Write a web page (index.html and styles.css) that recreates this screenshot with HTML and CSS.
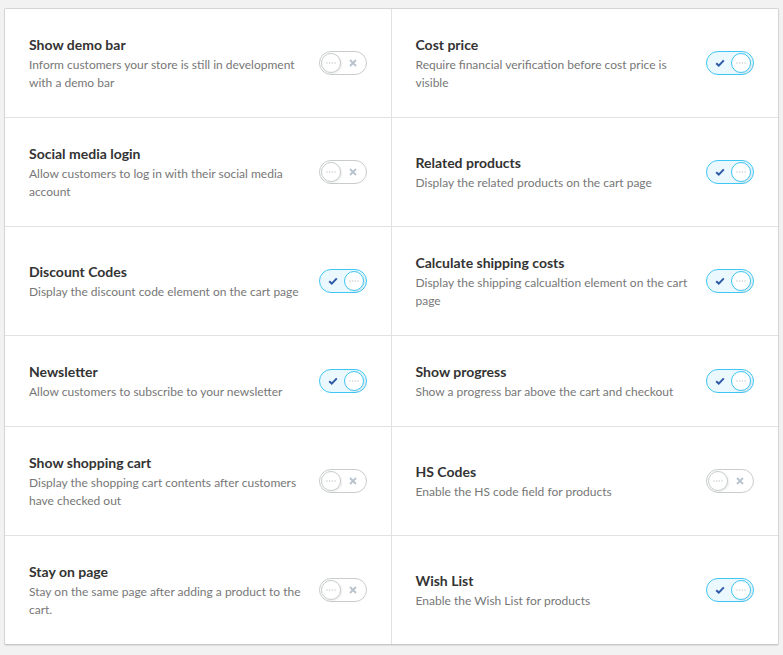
FILE: index.html
```html
<!DOCTYPE html>
<html lang="en">

<head>
    <meta charset="UTF-8">
    <title>Store settings</title>
    <link rel="stylesheet" href="styles.css">
</head>

<body>
    <div class="settings">
        <div class="setting">
            <div class="text">
                <h3>Show demo bar</h3>
                <p>Inform customers your store is still in development with a demo bar</p>
            </div>
            <span class="toggle"><span class="knob"><svg viewBox="0 0 10 2" width="10" height="2"><circle cx="1" cy="1" r="0.7"/><circle cx="3.7" cy="1" r="0.7"/><circle cx="6.3" cy="1" r="0.7"/><circle cx="9" cy="1" r="0.7"/></svg></span><span class="mark"><svg class="cross" viewBox="0 0 8 8" width="8" height="8"><path d="M1 1L7 7M7 1L1 7"/></svg></span></span>
        </div>
        <div class="setting">
            <div class="text">
                <h3>Cost price</h3>
                <p>Require financial verification before cost price is visible</p>
            </div>
            <span class="toggle on"><span class="knob"><svg viewBox="0 0 10 2" width="10" height="2"><circle cx="1" cy="1" r="0.7"/><circle cx="3.7" cy="1" r="0.7"/><circle cx="6.3" cy="1" r="0.7"/><circle cx="9" cy="1" r="0.7"/></svg></span><span class="mark"><svg class="check" viewBox="0 0 10 8" width="10" height="8"><path d="M1.2 4.2L3.8 6.6L8.8 1.4"/></svg></span></span>
        </div>

        <div class="setting">
            <div class="text">
                <h3>Social media login</h3>
                <p>Allow customers to log in with their social media account</p>
            </div>
            <span class="toggle"><span class="knob"><svg viewBox="0 0 10 2" width="10" height="2"><circle cx="1" cy="1" r="0.7"/><circle cx="3.7" cy="1" r="0.7"/><circle cx="6.3" cy="1" r="0.7"/><circle cx="9" cy="1" r="0.7"/></svg></span><span class="mark"><svg class="cross" viewBox="0 0 8 8" width="8" height="8"><path d="M1 1L7 7M7 1L1 7"/></svg></span></span>
        </div>
        <div class="setting">
            <div class="text">
                <h3>Related products</h3>
                <p>Display the related products on the cart page</p>
            </div>
            <span class="toggle on"><span class="knob"><svg viewBox="0 0 10 2" width="10" height="2"><circle cx="1" cy="1" r="0.7"/><circle cx="3.7" cy="1" r="0.7"/><circle cx="6.3" cy="1" r="0.7"/><circle cx="9" cy="1" r="0.7"/></svg></span><span class="mark"><svg class="check" viewBox="0 0 10 8" width="10" height="8"><path d="M1.2 4.2L3.8 6.6L8.8 1.4"/></svg></span></span>
        </div>

        <div class="setting">
            <div class="text">
                <h3>Discount Codes</h3>
                <p>Display the discount code element on the cart page</p>
            </div>
            <span class="toggle on"><span class="knob"><svg viewBox="0 0 10 2" width="10" height="2"><circle cx="1" cy="1" r="0.7"/><circle cx="3.7" cy="1" r="0.7"/><circle cx="6.3" cy="1" r="0.7"/><circle cx="9" cy="1" r="0.7"/></svg></span><span class="mark"><svg class="check" viewBox="0 0 10 8" width="10" height="8"><path d="M1.2 4.2L3.8 6.6L8.8 1.4"/></svg></span></span>
        </div>
        <div class="setting">
            <div class="text">
                <h3>Calculate shipping costs</h3>
                <p>Display the shipping calcualtion element on the cart page</p>
            </div>
            <span class="toggle on"><span class="knob"><svg viewBox="0 0 10 2" width="10" height="2"><circle cx="1" cy="1" r="0.7"/><circle cx="3.7" cy="1" r="0.7"/><circle cx="6.3" cy="1" r="0.7"/><circle cx="9" cy="1" r="0.7"/></svg></span><span class="mark"><svg class="check" viewBox="0 0 10 8" width="10" height="8"><path d="M1.2 4.2L3.8 6.6L8.8 1.4"/></svg></span></span>
        </div>

        <div class="setting">
            <div class="text">
                <h3>Newsletter</h3>
                <p>Allow customers to subscribe to your newsletter</p>
            </div>
            <span class="toggle on"><span class="knob"><svg viewBox="0 0 10 2" width="10" height="2"><circle cx="1" cy="1" r="0.7"/><circle cx="3.7" cy="1" r="0.7"/><circle cx="6.3" cy="1" r="0.7"/><circle cx="9" cy="1" r="0.7"/></svg></span><span class="mark"><svg class="check" viewBox="0 0 10 8" width="10" height="8"><path d="M1.2 4.2L3.8 6.6L8.8 1.4"/></svg></span></span>
        </div>
        <div class="setting">
            <div class="text">
                <h3>Show progress</h3>
                <p>Show a progress bar above the cart and checkout</p>
            </div>
            <span class="toggle on"><span class="knob"><svg viewBox="0 0 10 2" width="10" height="2"><circle cx="1" cy="1" r="0.7"/><circle cx="3.7" cy="1" r="0.7"/><circle cx="6.3" cy="1" r="0.7"/><circle cx="9" cy="1" r="0.7"/></svg></span><span class="mark"><svg class="check" viewBox="0 0 10 8" width="10" height="8"><path d="M1.2 4.2L3.8 6.6L8.8 1.4"/></svg></span></span>
        </div>

        <div class="setting">
            <div class="text">
                <h3>Show shopping cart</h3>
                <p>Display the shopping cart contents after customers have checked out</p>
            </div>
            <span class="toggle"><span class="knob"><svg viewBox="0 0 10 2" width="10" height="2"><circle cx="1" cy="1" r="0.7"/><circle cx="3.7" cy="1" r="0.7"/><circle cx="6.3" cy="1" r="0.7"/><circle cx="9" cy="1" r="0.7"/></svg></span><span class="mark"><svg class="cross" viewBox="0 0 8 8" width="8" height="8"><path d="M1 1L7 7M7 1L1 7"/></svg></span></span>
        </div>
        <div class="setting">
            <div class="text">
                <h3>HS Codes</h3>
                <p>Enable the HS code field for products</p>
            </div>
            <span class="toggle"><span class="knob"><svg viewBox="0 0 10 2" width="10" height="2"><circle cx="1" cy="1" r="0.7"/><circle cx="3.7" cy="1" r="0.7"/><circle cx="6.3" cy="1" r="0.7"/><circle cx="9" cy="1" r="0.7"/></svg></span><span class="mark"><svg class="cross" viewBox="0 0 8 8" width="8" height="8"><path d="M1 1L7 7M7 1L1 7"/></svg></span></span>
        </div>

        <div class="setting">
            <div class="text">
                <h3>Stay on page</h3>
                <p>Stay on the same page after adding a product to the cart.</p>
            </div>
            <span class="toggle"><span class="knob"><svg viewBox="0 0 10 2" width="10" height="2"><circle cx="1" cy="1" r="0.7"/><circle cx="3.7" cy="1" r="0.7"/><circle cx="6.3" cy="1" r="0.7"/><circle cx="9" cy="1" r="0.7"/></svg></span><span class="mark"><svg class="cross" viewBox="0 0 8 8" width="8" height="8"><path d="M1 1L7 7M7 1L1 7"/></svg></span></span>
        </div>
        <div class="setting">
            <div class="text">
                <h3>Wish List</h3>
                <p>Enable the Wish List for products</p>
            </div>
            <span class="toggle on"><span class="knob"><svg viewBox="0 0 10 2" width="10" height="2"><circle cx="1" cy="1" r="0.7"/><circle cx="3.7" cy="1" r="0.7"/><circle cx="6.3" cy="1" r="0.7"/><circle cx="9" cy="1" r="0.7"/></svg></span><span class="mark"><svg class="check" viewBox="0 0 10 8" width="10" height="8"><path d="M1.2 4.2L3.8 6.6L8.8 1.4"/></svg></span></span>
        </div>
    </div>
</body>

</html>
```

FILE: styles.css
```css
body {
    font-family: Lato, "Open Sans", sans-serif;
    margin: 0;
    padding: 8px 4px 12px 4px;
    background: #f2f2f2;
    color: #333;
}

.settings {
    display: grid;
    grid-template-columns: 1fr 1fr;
    background: #fff;
    border: 1px solid #d4d6d6;
    border-bottom-color: #c4c8c8;
    border-radius: 2px;
    box-shadow: 0 1px 1px rgba(0, 0, 0, 0.08);
}

.setting {
    display: flex;
    align-items: center;
    gap: 14px;
    padding: 25px 24px;
    border-bottom: 1px solid #e2e2e2;
}

.setting:nth-child(odd) {
    border-right: 1px solid #e2e2e2;
}

.setting:nth-last-child(-n+2) {
    border-bottom: none;
}

.text {
    flex: 1;
}

.text h3 {
    margin: 0;
    font-size: 14px;
    line-height: 22px;
    font-weight: 700;
    color: #333;
}

.text p {
    margin: 0;
    font-size: 12px;
    line-height: 18px;
    color: #777;
}

.toggle {
    flex: none;
    display: flex;
    align-items: center;
    box-sizing: border-box;
    width: 48px;
    height: 24px;
    padding: 0 1px;
    border: 1px solid #c8cccc;
    border-radius: 12px;
    background: #fff;
}

.toggle.on {
    flex-direction: row-reverse;
    padding: 0 2px;
    border-color: #3fc6f3;
    background: #ebf8fe;
}

.knob {
    display: flex;
    align-items: center;
    justify-content: center;
    box-sizing: border-box;
    width: 20px;
    height: 20px;
    border: 1px solid #c8cccc;
    border-radius: 50%;
    background: #fff;
    box-shadow: 1px 1px 2px rgba(0, 0, 0, 0.08);
}

.toggle.on .knob {
    border-color: #3fc6f3;
}

.knob svg {
    fill: #c4c8cc;
}

.mark {
    flex: 1;
    display: flex;
    justify-content: center;
}

.cross path {
    stroke: #b8c2cc;
    stroke-width: 1.8;
    fill: none;
}

.check path {
    stroke: #2e5aa8;
    stroke-width: 2;
    fill: none;
}
```
